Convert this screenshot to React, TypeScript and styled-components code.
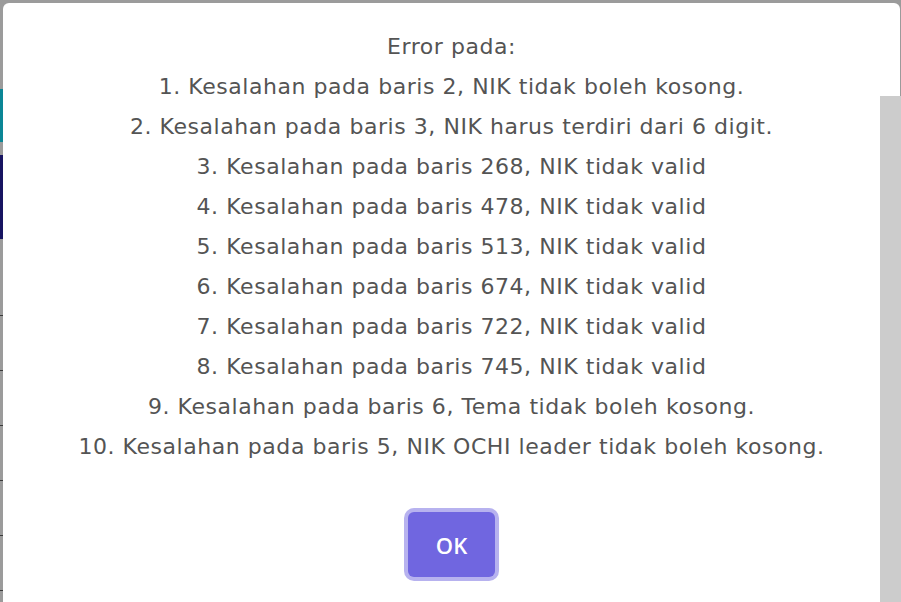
import React from "react";
import styled, { createGlobalStyle } from "styled-components";

const Global = createGlobalStyle`
  html, body { margin: 0; padding: 0; }
  body { font-family: "DejaVu Sans", "Open Sans", sans-serif; overflow: hidden; }
`;

const Screen = styled.div`
  position: relative;
  width: 100vw;
  height: 100vh;
  overflow: hidden;
  background: #9b9b9b;
`;

const BehindColumn = styled.div`
  display: flex;
  flex-direction: column;
  width: 3px;
  padding-top: 89px;
`;

const BehindBlock = styled.div<{ $h: number; $c: string; $mb: number }>`
  height: ${(p) => p.$h}px;
  background: ${(p) => p.$c};
  margin-bottom: ${(p) => p.$mb}px;
`;

const BehindRule = styled.div`
  height: 1px;
  background: #3a3a3a;
  margin-bottom: 54px;
`;

const Popup = styled.div`
  position: absolute;
  top: 3px;
  left: 3px;
  right: 1px;
  bottom: -30px;
  background: #ffffff;
  border-radius: 6px;
  display: flex;
  flex-direction: column;
  align-items: center;
  padding-top: 24px;
  box-sizing: border-box;
`;

const Messages = styled.div`
  display: flex;
  flex-direction: column;
  align-items: center;
  color: #545454;
  font-family: "DejaVu Sans", sans-serif;
  font-size: 22px;
  letter-spacing: 0.55px;
  line-height: 40px;
  text-align: center;
`;

const Line = styled.div`
  white-space: nowrap;
`;

const OkButton = styled.button`
  margin-top: 45px;
  width: 87px;
  height: 65px;
  border: none;
  border-radius: 6px;
  background: #7066e0;
  color: #ffffff;
  font-family: "Open Sans", sans-serif;
  font-size: 22px;
  font-weight: 600;
  box-shadow: 0 0 0 4px rgba(112, 102, 224, 0.5);
  cursor: pointer;
`;

const ScrollTrack = styled.div`
  position: absolute;
  top: 96px;
  right: 0;
  width: 21px;
  bottom: 0;
  background: #cccccc;
`;

const lines = [
  "Error pada:",
  "1. Kesalahan pada baris 2, NIK tidak boleh kosong.",
  "2. Kesalahan pada baris 3, NIK harus terdiri dari 6 digit.",
  "3. Kesalahan pada baris 268, NIK tidak valid",
  "4. Kesalahan pada baris 478, NIK tidak valid",
  "5. Kesalahan pada baris 513, NIK tidak valid",
  "6. Kesalahan pada baris 674, NIK tidak valid",
  "7. Kesalahan pada baris 722, NIK tidak valid",
  "8. Kesalahan pada baris 745, NIK tidak valid",
  "9. Kesalahan pada baris 6, Tema tidak boleh kosong.",
  "10. Kesalahan pada baris 5, NIK OCHI leader tidak boleh kosong.",
];

export default function App() {
  return (
    <Screen>
      <Global />
      <BehindColumn>
        <BehindBlock $h={53} $c="#0b8696" $mb={13} />
        <BehindBlock $h={84} $c="#171461" $mb={76} />
        {[0, 1, 2, 3, 4, 5].map((i) => (
          <BehindRule key={i} />
        ))}
      </BehindColumn>
      <Popup>
        <Messages>
          {lines.map((l) => (
            <Line key={l}>{l}</Line>
          ))}
        </Messages>
        <OkButton>OK</OkButton>
      </Popup>
      <ScrollTrack />
    </Screen>
  );
}
